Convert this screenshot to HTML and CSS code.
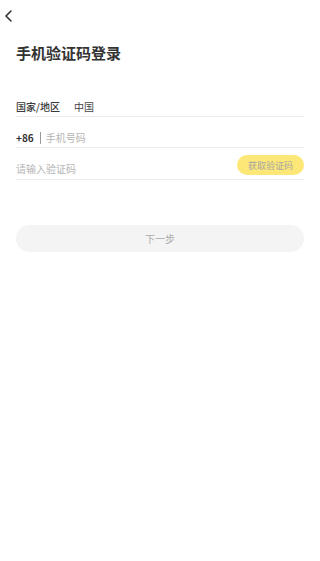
FILE: index.html
```html
<!DOCTYPE html>
<html lang="zh-CN">
<head>
  <meta charset="UTF-8">
  <meta name="viewport" content="width=device-width, initial-scale=1.0">
  <title>手机验证码登录</title>
  <link rel="stylesheet" href="styles.css">
</head>
<body>
  <div class="page">
    <div class="top-bar">
      <svg class="back" width="10" height="14" viewBox="0 0 10 14">
        <polyline points="7,2 2,7 7,12" fill="none" stroke="#333" stroke-width="1.6" stroke-linecap="round" stroke-linejoin="round"/>
      </svg>
    </div>
    <h1 class="title">手机验证码登录</h1>

    <div class="form">
      <div class="row">
        <span class="label">国家/地区</span>
        <span class="value">中国</span>
      </div>
      <div class="row">
        <span class="code">+86</span>
        <span class="sep"></span>
        <input class="field" type="tel" placeholder="手机号码">
      </div>
      <div class="row row-last">
        <input class="field" type="text" placeholder="请输入验证码">
        <button class="get-code">获取验证码</button>
      </div>
    </div>

    <button class="next-btn">下一步</button>
  </div>
</body>
</html>
```

FILE: styles.css
```css
body {
  margin: 0;
  background-color: #fff;
  font-family: "Noto Sans CJK SC", "Noto Sans", sans-serif;
  color: #333;
}

.page {
  padding: 0 16px;
}

.top-bar {
  height: 30px;
  display: flex;
  align-items: center;
  margin-left: -12px;
  padding-top: 2px;
  box-sizing: border-box;
}

.back {
  display: block;
}

.title {
  margin: 12px 0 0;
  font-size: 15px;
  line-height: 22px;
  font-weight: bold;
  color: #333;
}

.form {
  margin-top: 22px;
}

.row {
  height: 31px;
  box-sizing: border-box;
  display: flex;
  align-items: flex-end;
  padding-bottom: 3px;
  border-bottom: 1px solid #ebebeb;
  font-size: 10px;
  line-height: 12px;
}

.row-last {
  height: 32px;
  padding-bottom: 4px;
}

.label {
  width: 58px;
  color: #3a3a3a;
  font-weight: 500;
}

.value {
  color: #444;
}

.code {
  font-weight: bold;
  color: #333;
}

.sep {
  width: 1px;
  height: 12px;
  background-color: #999;
  margin: 0 5px 0 6px;
}

.field {
  flex: 1;
  border: none;
  outline: none;
  padding: 0;
  font-family: inherit;
  font-size: 10px;
  line-height: 12px;
  height: 12px;
  color: #333;
  background: transparent;
}

.field::placeholder {
  color: #b4b4b4;
}

.get-code {
  width: 67px;
  height: 20px;
  border: none;
  border-radius: 10px;
  background-color: #fde877;
  color: #a5a5a5;
  font-family: inherit;
  font-size: 9px;
  padding: 0;
  margin-bottom: 0;
}

.next-btn {
  display: block;
  width: 100%;
  height: 27px;
  margin-top: 45px;
  border: none;
  border-radius: 14px;
  background-color: #f4f4f4;
  color: #aaa;
  font-family: inherit;
  font-size: 10px;
  padding: 0;
}
```
